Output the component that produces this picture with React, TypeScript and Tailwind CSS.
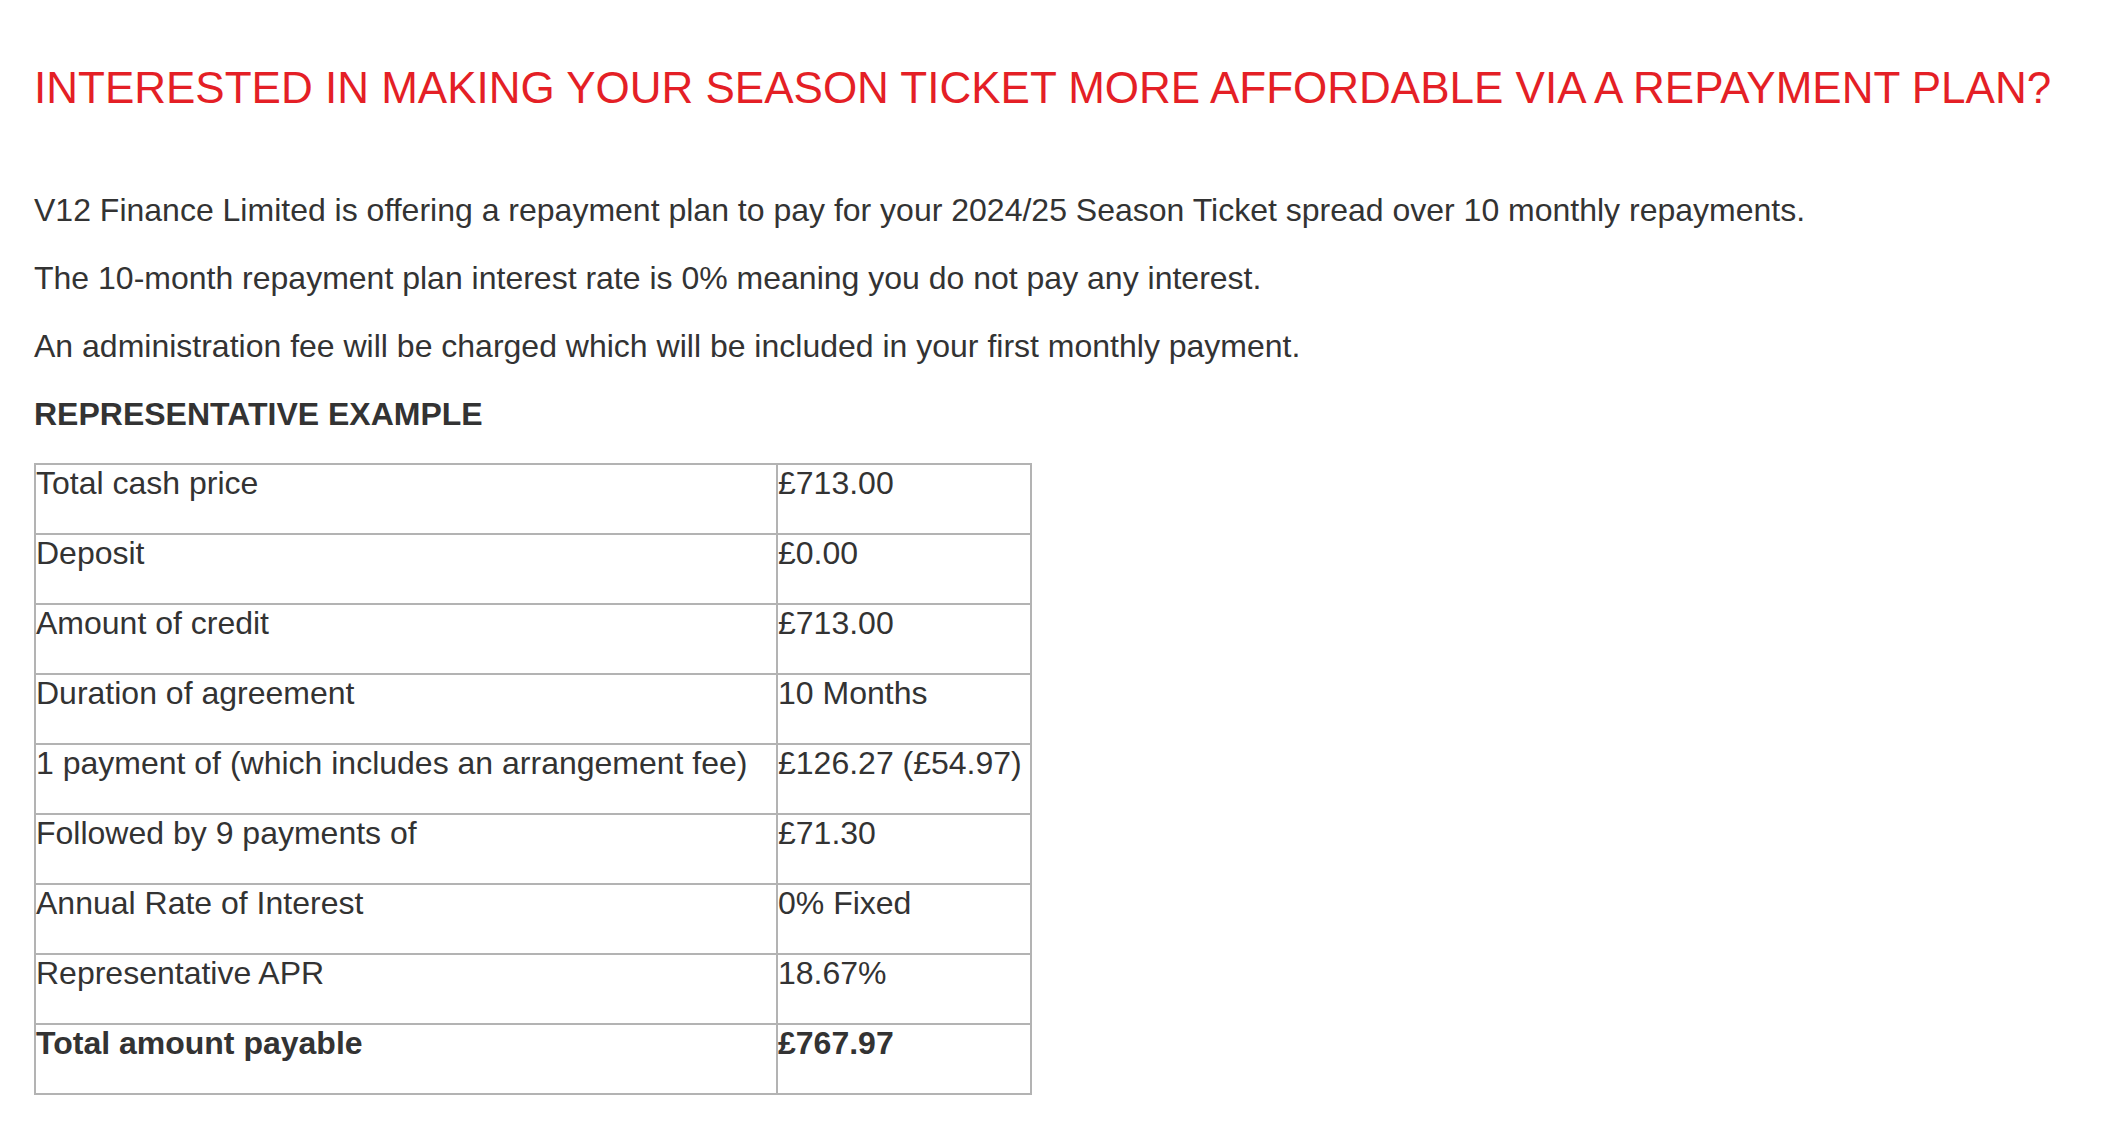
const rows: { label: string; value: string; bold?: boolean }[] = [
  { label: "Total cash price", value: "£713.00" },
  { label: "Deposit", value: "£0.00" },
  { label: "Amount of credit", value: "£713.00" },
  { label: "Duration of agreement", value: "10 Months" },
  { label: "1 payment of (which includes an arrangement fee)", value: "£126.27 (£54.97)" },
  { label: "Followed by 9 payments of", value: "£71.30" },
  { label: "Annual Rate of Interest", value: "0% Fixed" },
  { label: "Representative APR", value: "18.67%" },
  { label: "Total amount payable", value: "£767.97", bold: true },
];

export default function App() {
  return (
    <div className="bg-white px-[34px] pt-[62px] pb-8 font-['Liberation_Sans',Arial,sans-serif] text-[#333333]">
      {/* headline */}
      <h1 className="text-[44px] leading-[52px] text-[#e41f26]">
        INTERESTED IN MAKING YOUR SEASON TICKET MORE AFFORDABLE VIA A REPAYMENT PLAN?
      </h1>

      <div className="mt-[76px] text-[32px] leading-[40px]">
        <p className="mb-[28px]">
          V12 Finance Limited is offering a repayment plan to pay for your 2024/25 Season Ticket spread over 10 monthly repayments.
        </p>
        <p className="mb-[28px]">
          The 10-month repayment plan interest rate is 0% meaning you do not pay any interest.
        </p>
        <p className="mb-[28px]">
          An administration fee will be charged which will be included in your first monthly payment.
        </p>
        <h2 className="font-bold">REPRESENTATIVE EXAMPLE</h2>
      </div>

      {/* representative example table */}
      <table className="mt-[29px] w-[998px] border-collapse text-[32px] leading-[36px]">
        <tbody>
          {rows.map((r) => (
            <tr key={r.label} className={r.bold ? "font-bold" : ""}>
              <td className="h-[70px] w-[742px] border-2 border-[#b3b3b3] p-0 align-top">{r.label}</td>
              <td className="h-[70px] border-2 border-[#b3b3b3] p-0 align-top">{r.value}</td>
            </tr>
          ))}
        </tbody>
      </table>
    </div>
  );
}
